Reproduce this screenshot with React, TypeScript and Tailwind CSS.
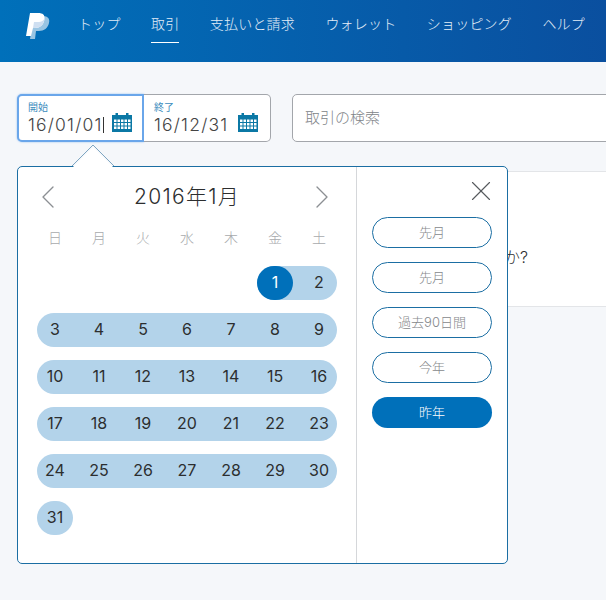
import { ChevronLeft, ChevronRight, X } from "lucide-react"

const FONT = "font-['Inter','Noto_Sans_CJK_JP','Liberation_Sans',sans-serif]"

const NAV = ["トップ", "取引", "支払いと請求", "ウォレット", "ショッピング", "ヘルプ"]
const WEEK = ["日", "月", "火", "水", "木", "金", "土"]
const ROWS = [
  [3, 4, 5, 6, 7, 8, 9],
  [10, 11, 12, 13, 14, 15, 16],
  [17, 18, 19, 20, 21, 22, 23],
  [24, 25, 26, 27, 28, 29, 30],
]
const RANGES = ["先月", "先月", "過去90日間", "今年"]

function Logo() {
  return (
    <svg width="24" height="27" viewBox="0 0 24 27" className="shrink-0">
      <path d="M8 3h9c5 0 7 3 6 7-1 5-5 8-10 8h-3l-1 8H4z" fill="#ffffff" opacity="0.6" />
      <path d="M4 0h8c5 0 7 2 6.500 6-.7 6-4.500 9-9.500 9H7l-2 8H0z" fill="#ffffff" />
      <path d="M8 9h5c2 0 4-1 5.400-3-.6 6-4.400 9-9.400 9H7z" fill="#cfdff1" />
    </svg>
  )
}

function CalendarIcon() {
  return (
    <svg width="20" height="19" viewBox="0 0 20 19" className="mb-[3px] ml-auto shrink-0">
      <rect x="0" y="2" width="20" height="17" fill="#0b78a5" />
      <rect x="3.500" y="0" width="2.500" height="4" fill="#0b78a5" />
      <rect x="14" y="0" width="2.500" height="4" fill="#0b78a5" />
      <g fill="#ffffff">
        {[6.5, 10, 13.5].map((y) =>
          [2, 5.5, 9, 12.5, 16].map((x) => <rect key={`${x}-${y}`} x={x} y={y} width="2.5" height="2.5" />),
        )}
      </g>
    </svg>
  )
}

function DateField({ label, value, focused }: { label: string; value: string; focused?: boolean }) {
  return (
    <div
      className={
        focused
          ? "flex h-[48px] w-[127px] shrink-0 items-end rounded-l-[5px] border-2 border-[#6aa6ea] bg-white pb-[5px] pl-[9px] pr-[10px] shadow-[0_0_2px_#8bbcf0]"
          : "flex h-[48px] flex-1 items-end rounded-r-[5px] border border-l-0 border-[#a3a6ab] bg-white pb-[6px] pl-[10px] pr-[12px]"
      }
    >
      <div className="flex flex-col">
        <span className="text-[10px] leading-[13px] text-[#3d8dbd]">{label}</span>
        <span className="flex h-[21px] items-center whitespace-nowrap text-[17.5px] font-light leading-[21px] tracking-[1.2px] text-[#444444]">
          {value}
          {focused ? <span className="h-[16px] w-px bg-[#333333]" /> : null}
        </span>
      </div>
      <CalendarIcon />
    </div>
  )
}

function DayCell({ day, active }: { day: number; active?: boolean }) {
  return (
    <span
      className={
        active
          ? "flex h-[34px] w-[36px] items-center justify-center rounded-full bg-[#0070ba] pb-[2px] text-[16px] font-normal text-white"
          : "flex h-[34px] w-[36px] items-center justify-center pb-[2px] text-[16px] font-normal text-[#2c2e2f]"
      }
    >
      {day}
    </span>
  )
}

export default function App() {
  return (
    <div className={`${FONT} relative h-[600px] w-[606px] overflow-hidden bg-[#f5f7fa]`}>
      <header className="flex h-[62px] items-start bg-gradient-to-r from-[#0070ba] to-[#0a4f9f] pl-[26px] pt-[13px]">
        <Logo />
        <nav className="ml-[28px] flex gap-[30.4px] pt-[1px]">
          {NAV.map((item, i) => (
            <div key={item} className="flex flex-col items-stretch">
              <span className="whitespace-nowrap text-[14px] font-light leading-[20px] tracking-[0.2px] text-[#e4eef8]">
                {item}
              </span>
              {i === 1 ? <span className="mt-[8px] h-px bg-white" /> : null}
            </div>
          ))}
        </nav>
      </header>

      <main className="pl-[17px] pt-[32px]">
        <div className="flex gap-[21px]">
          <div className="flex w-[254px] shrink-0">
            <DateField label="開始" value="16/01/01" focused />
            <DateField label="終了" value="16/12/31" />
          </div>
          <div className="flex h-[48px] w-[340px] shrink-0 items-center rounded-[5px] border border-[#a3a6ab] bg-white pl-[12px] pt-[1px] text-[15px] font-light text-[#808488]">
            取引の検索
          </div>
        </div>
        <div className="mt-[29px] flex h-[136px] items-center justify-end border-y border-[#e3e5e8] bg-white pr-[78px] text-[16px] font-light text-[#2c2e2f]">
          <span className="mt-[35px]">取引をお探しですか?</span>
        </div>
      </main>

      <svg width="44" height="23" viewBox="0 0 44 23" className="absolute left-[71px] top-[144px] z-20">
        <path d="M1 22 L22 1 L43 22" fill="#f5f7fa" stroke="#7ea6c2" />
        <path d="M2 23 L22 3 L42 23z" fill="#ffffff" />
      </svg>

      <div className="absolute left-[17px] top-[166px] z-10 flex h-[398px] w-[491px] rounded-[5px] border border-[#1b6ea3] bg-white">
        <section className="flex w-[339px] shrink-0 flex-col border-r border-[#d5d7da] pl-[19px]">
          <div className="flex h-[60px] w-[300px] items-center justify-between">
            <ChevronLeft className="-ml-[9px] h-[40px] w-[40px] text-[#8c8f93]" strokeWidth={0.8} />
            <span className="ml-[4px] text-[21px] font-light tracking-[1.3px] text-[#2c2e2f]">2016年1月</span>
            <ChevronRight className="-mr-[5px] h-[40px] w-[40px] text-[#8c8f93]" strokeWidth={0.8} />
          </div>
          <div className="flex h-[22px] w-[300px] gap-[8px]">
            {WEEK.map((d) => (
              <span key={d} className="w-[36px] text-center text-[14px] font-light leading-[22px] text-[#a8aaad]">
                {d}
              </span>
            ))}
          </div>
          <div className="mt-[17px] flex w-[300px] flex-col gap-[13px]">
            <div className="ml-auto flex w-[80px] gap-[8px] rounded-full bg-[#b3d3ea]">
              <DayCell day={1} active />
              <DayCell day={2} />
            </div>
            {ROWS.map((row) => (
              <div key={row[0]} className="flex gap-[8px] rounded-full bg-[#b3d3ea]">
                {row.map((d) => (
                  <DayCell key={d} day={d} />
                ))}
              </div>
            ))}
            <div className="w-[36px] rounded-full bg-[#b3d3ea]">
              <DayCell day={31} />
            </div>
          </div>
        </section>
        <aside className="flex flex-1 flex-col pl-[15px]">
          <div className="flex h-[50px] w-[126px] items-center justify-end">
            <X className="-mt-[2px] h-[34px] w-[34px] shrink-0 text-[#55585c]" strokeWidth={0.8} />
          </div>
          <div className="flex flex-col gap-[14px]">
            {RANGES.map((r, i) => (
              <button
                key={`${r}-${i}`}
                className="h-[31px] w-[120px] rounded-full border border-[#1b6ea3] bg-white text-[13px] font-light text-[#85888b]"
              >
                {r}
              </button>
            ))}
            <button className="h-[31px] w-[120px] rounded-full bg-[#0070ba] text-[13px] font-light text-white">昨年</button>
          </div>
        </aside>
      </div>
    </div>
  )
}
